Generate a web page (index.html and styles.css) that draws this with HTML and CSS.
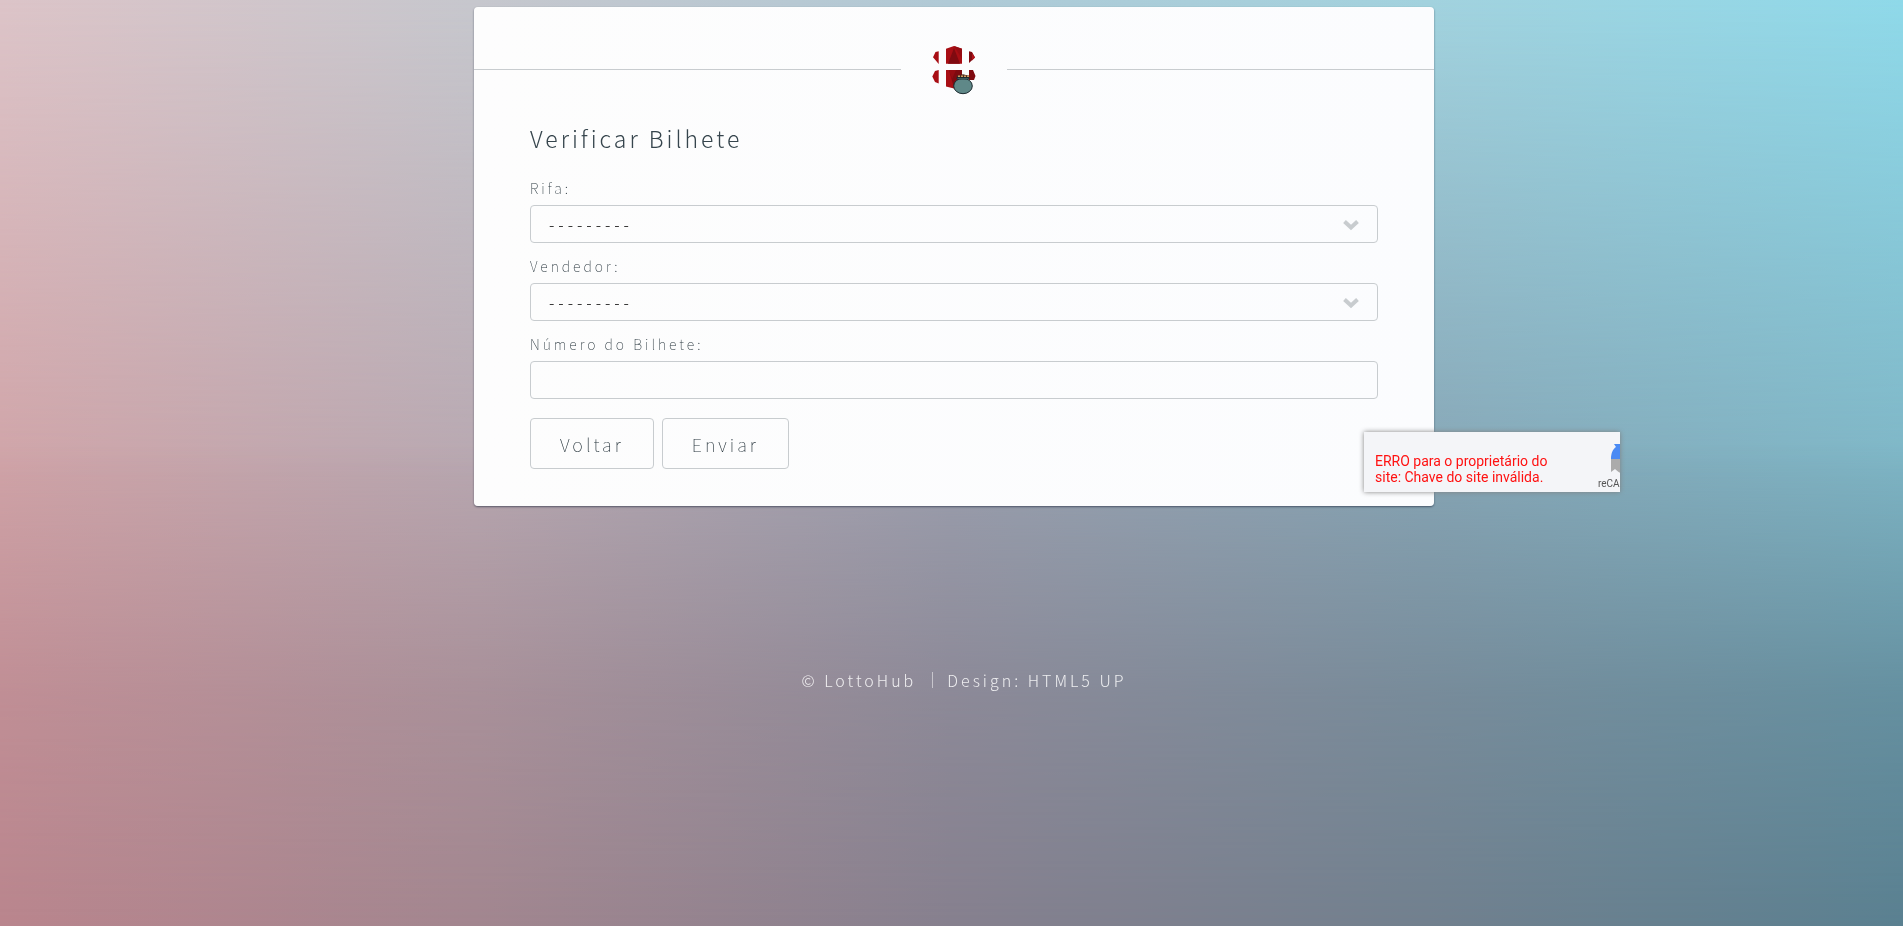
FILE: index.html
```html
<!DOCTYPE html>
<html lang="pt-BR">
<head>
<meta charset="utf-8">
<meta name="viewport" content="width=device-width, initial-scale=1">
<title>LottoHub</title>
<link rel="stylesheet" href="styles.css">
</head>
<body>
<div class="wrapper">
  <main class="card">
    <header class="brand">
      <svg class="logo" viewBox="0 0 46 54" role="img" aria-label="LottoHub">
        <g transform="translate(0 2)">
          <g fill="#a80e14">
            <path d="M2 13.3L4.500 8l3.200-.7V20zM1.300 32.500L4 27l3.700-1v13.500L4 38z"/>
            <path d="M15 4.700L23 2l8 2.700v15H15zM15 26h16v16l-8 2.500-8-2z"/>
          </g>
          <g fill="#7f0a10">
            <path d="M23 4l6 15.700H17z"/>
            <path d="M18 26h13v16l-8 2z"/>
            <path d="M38 7.300l3 .7 3 5.500-6 5.500zM38 26h4l2.500 6-1.500 4h-5z"/>
          </g>
          <path fill="#b3121a" d="M41 9l3 4.500-3 3z"/>
          <path fill="#960c12" d="M23 2l8 2.700V15zM18 26h7l-4 9z"/>
          <path fill="#4a2c20" d="M25.500 34l.5-2.500 3-.5 3-.7 3 .7 3 .5.5 2.500z"/>
          <path stroke="#d09a62" stroke-width="1.500" stroke-dasharray="2 1" d="M27 32.300h11"/>
          <ellipse cx="32" cy="42" rx="9.300" ry="7.700" fill="#5f8888" stroke="#1c2b30"/>
          <path fill="#5f8888" stroke="#1c2b30" d="M26 33.500h12v1.500H26z"/>
        </g>
      </svg>
    </header>
    <h1 class="title">Verificar Bilhete</h1>
    <form class="form">
      <div class="field">
        <label class="label" for="rifa">Rifa:</label>
        <div class="picker">
          <select class="control" id="rifa"><option>---------</option></select>
          <svg class="chevron" viewBox="0 0 18 12" aria-hidden="true"><path d="M2.500 2.500L9 8.500l6.500-6"/></svg>
        </div>
      </div>
      <div class="field">
        <label class="label" for="vendedor">Vendedor:</label>
        <div class="picker">
          <select class="control" id="vendedor"><option>---------</option></select>
          <svg class="chevron" viewBox="0 0 18 12" aria-hidden="true"><path d="M2.500 2.500L9 8.500l6.500-6"/></svg>
        </div>
      </div>
      <div class="field">
        <label class="label" for="numero">Número do Bilhete:</label>
        <input class="control" id="numero" type="text">
      </div>
      <div class="actions">
        <button class="button" type="button">Voltar</button>
        <button class="button" type="submit">Enviar</button>
      </div>
    </form>
    <aside class="captcha">
      <p class="captcha-error">ERRO para o proprietário do site: Chave do site inválida.</p>
      <div class="captcha-brand">
        <svg class="captcha-logo" viewBox="0 0 32 32" aria-hidden="true">
          <path fill="#4a8af4" d="M0 16C0 10 2 6 5 4L3 1h13v8c-4 0-6 2-7 7z"/>
          <path fill="#1c3aa9" d="M16 1c6 0 9 2 12 5l3-3v13H16z"/>
          <path fill="#ababab" d="M0 16h9c1 5 4 7 7 7v8C10 31 7 29 4 26l-4 3z"/>
        </svg>
        <span>reCA</span>
      </div>
    </aside>
  </main>
  <footer class="footer">
    <span>© LottoHub</span>
    <span class="credit">Design: HTML5 UP</span>
  </footer>
</div>
</body>
</html>
```
FILE: styles.css
```css
* { box-sizing: border-box; }

html { min-height: 100%; }

body {
  margin: 0;
  min-height: 100vh;
  color: #1f2d35;
  font-family: "Noto Sans CJK JP", "Noto Sans", sans-serif;
  font-weight: 100;
  letter-spacing: 3px;
  background: linear-gradient(90deg, #d0a4a8, #b8a8b1 25%, #9b9fae 50%, #87a6b6 75%, #7fb6c6);
}

body::before,
body::after {
  content: "";
  position: fixed;
  inset: 0;
  z-index: -1;
}

body::before {
  background: linear-gradient(90deg, #dcc4c8, #c6c7cd 25%, #b0cad6 50%, #a2d2de 75%, #8fd9e9);
  mask-image: linear-gradient(#000, transparent 52%);
}

body::after {
  background: linear-gradient(90deg, #b9858d, #a2868f 25%, #86808e 50%, #71808e 75%, #5a8090);
  mask-image: linear-gradient(transparent 48%, rgba(0, 0, 0, 0.7) 75%, #000);
}

.wrapper {
  display: flex;
  flex-direction: column;
  align-items: center;
  padding: 7px 0 0 5px;
}

.card {
  position: relative;
  width: 960px;
  max-width: 100%;
  padding: 35px 56px 37px;
  border-radius: 4px;
  background: linear-gradient(90deg, #fdfdfd, #fbfcfe);
  box-shadow: 0 1px 2px rgba(30, 40, 60, 0.6);
}

.brand {
  display: flex;
  align-items: center;
  gap: 30px;
  margin: 0 -56px;
}

.brand::before,
.brand::after {
  content: "";
  flex: 1;
  height: 1px;
  background: #c8cccf;
}

.logo {
  width: 46px;
  height: 54px;
  fill: none;
}

.title {
  margin: 22px 0;
  color: #36454d;
  font-size: 23px;
  line-height: 40px;
  font-weight: 300;
}

.field { margin-bottom: 15px; }

.label {
  display: block;
  margin-bottom: 9px;
  font-size: 14px;
  line-height: 16px;
}

.picker { position: relative; }

.control {
  display: block;
  width: 100%;
  height: 38px;
  padding: 0 18px;
  border: 1px solid #c8cccf;
  border-radius: 4px;
  background: transparent;
  color: #000;
  font: inherit;
  font-size: 16px;
  font-weight: 300;
  letter-spacing: 4px;
  appearance: none;
}

.chevron {
  position: absolute;
  top: 14px;
  right: 18px;
  width: 18px;
  height: 12px;
  fill: none;
  stroke: #c8cccf;
  stroke-width: 4;
  pointer-events: none;
}

.actions {
  display: flex;
  gap: 8px;
  padding-top: 4px;
}

.button {
  height: 51px;
  padding: 0 29px;
  border: 1px solid #c8cccf;
  border-radius: 4px;
  background: transparent;
  color: inherit;
  font: inherit;
  font-size: 18px;
  letter-spacing: inherit;
}

.captcha {
  position: absolute;
  right: -186px;
  bottom: 14px;
  display: flex;
  width: 256px;
  height: 60px;
  overflow: hidden;
  background: #f4f5f8;
  box-shadow: 0 0 5px #808080;
  font-family: Roboto, sans-serif;
  font-weight: 400;
  letter-spacing: normal;
}

.captcha-error {
  flex: none;
  width: 190px;
  margin: 0 33px 0 11px;
  padding-top: 21px;
  color: #f11;
  font-size: 14px;
  line-height: 16px;
}

.captcha-brand {
  flex: none;
  padding-top: 11px;
  color: #555;
  font-size: 10px;
  line-height: 14px;
}

.captcha-logo {
  display: block;
  width: 32px;
  height: 32px;
  margin: 0 0 2px 13px;
}

.footer {
  display: flex;
  gap: 16px;
  margin-top: 162px;
  padding-left: 20px;
  color: rgba(255, 255, 255, 0.85);
  font-size: 16px;
  font-weight: 300;
  line-height: 24px;
}

.credit {
  display: flex;
  align-items: center;
  gap: 14px;
}

.credit::before {
  content: "";
  width: 1px;
  height: 16px;
  background: rgba(255, 255, 255, 0.5);
}
```
